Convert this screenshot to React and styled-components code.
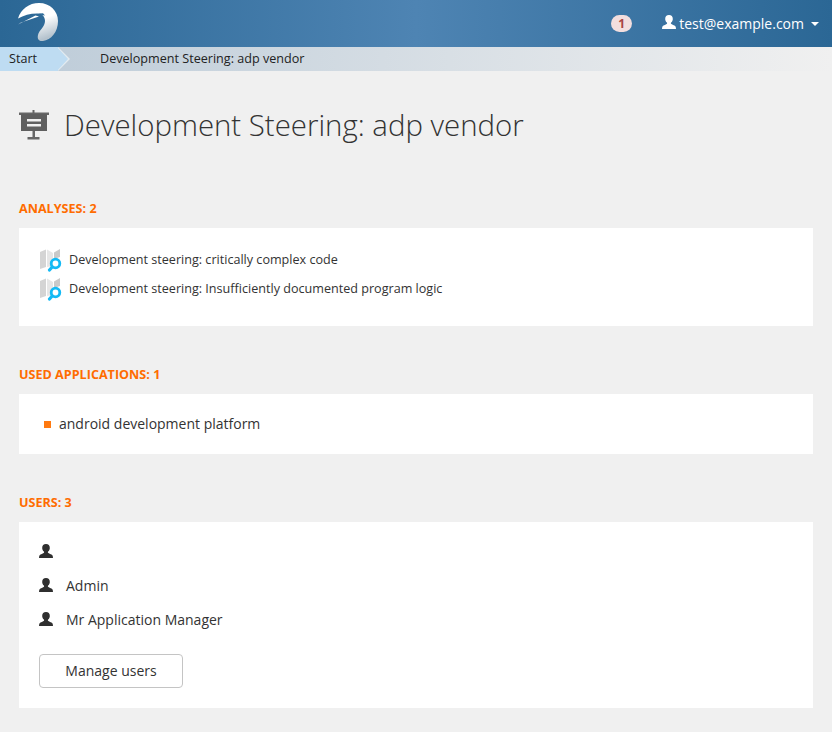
import React from "react";
import styled, { createGlobalStyle } from "styled-components";

const GlobalStyle = createGlobalStyle`
  html, body {
    margin: 0;
    padding: 0;
    background: #f0f0f0;
    font-family: "Open Sans", "Liberation Sans", sans-serif;
    color: #333;
  }
`;

const Page = styled.div`
  width: 832px;
  height: 732px;
  overflow: hidden;
`;

const Navbar = styled.header`
  height: 47px;
  display: flex;
  align-items: center;
  padding: 0 13px 0 18px;
  background: linear-gradient(90deg, #2b6795 0%, #4e84b3 50%, #2b6795 100%);
`;

const Logo = styled.svg`
  width: 40px;
  height: 40px;
  margin-top: -4px;
`;

const NavRight = styled.div`
  margin-left: auto;
  display: flex;
  align-items: center;
`;

const Badge = styled.span`
  width: 21px;
  height: 17px;
  border-radius: 9px;
  background: #f2dede;
  color: #a94442;
  font-size: 12px;
  font-weight: 700;
  display: flex;
  align-items: center;
  justify-content: center;
  margin-right: 30px;
`;

const UserMenu = styled.div`
  display: flex;
  align-items: center;
  color: #fff;
  font-size: 14px;
  margin-top: -1px;
`;

const Caret = styled.span`
  width: 0;
  height: 0;
  margin-left: 7px;
  margin-top: 2px;
  border-left: 4px solid transparent;
  border-right: 4px solid transparent;
  border-top: 4px solid #fff;
`;

const Breadcrumb = styled.nav`
  height: 24px;
  display: flex;
  align-items: center;
  font-size: 12.6px;
  color: #222;
  background: linear-gradient(90deg, #bccbd8 0%, #f0f0f0 100%);
`;

const CrumbStart = styled.div`
  position: relative;
  width: 58px;
  height: 24px;
  line-height: 23px;
  padding-left: 9px;
  box-sizing: border-box;
  background: #bedcf2;

  &::before {
    content: "";
    position: absolute;
    top: 0;
    left: 58px;
    border-top: 12px solid transparent;
    border-bottom: 12px solid transparent;
    border-left: 12px solid #e4ebf0;
  }

  &::after {
    content: "";
    position: absolute;
    top: 0;
    left: 57px;
    border-top: 12px solid transparent;
    border-bottom: 12px solid transparent;
    border-left: 11px solid #bedcf2;
  }
`;

const CrumbCurrent = styled.div`
  margin-left: 42px;
  height: 24px;
  line-height: 23px;
`;

const Content = styled.main`
  padding: 0 19px;
`;

const TitleRow = styled.div`
  display: flex;
  align-items: center;
  height: 44px;
  margin-top: 32px;
  margin-bottom: 53px;
`;

const TitleIcon = styled.svg`
  width: 32px;
  height: 32px;
  margin-left: -1px;
  margin-right: 14px;
  flex: none;
`;

const Title = styled.h1`
  margin: 0;
  font-size: 29.4px;
  font-weight: 300;
  color: #333;
  line-height: 44px;
  white-space: nowrap;
`;

const SectionTitle = styled.h2`
  margin: 0;
  height: 18px;
  line-height: 18px;
  font-size: 12.6px;
  font-weight: 700;
  color: #ff6c00;
  text-transform: uppercase;
`;

const Panel = styled.section`
  background: #fff;
  box-sizing: border-box;
  height: ${({ $height }) => $height}px;
  padding: ${({ $padding }) => $padding};
  margin-top: 10px;
  margin-bottom: 40px;
`;

const AnalysisRow = styled.div`
  display: flex;
  align-items: center;
  height: 29px;
  font-size: 12.6px;
  color: #333;
`;

const AnalysisIcon = styled.svg`
  width: 24px;
  height: 24px;
  margin-right: 6px;
  flex: none;
`;

const AppRow = styled.div`
  display: flex;
  align-items: center;
  height: 60px;
  padding-bottom: 1px;
  box-sizing: border-box;
  font-size: 14px;
  color: #333;
`;

const Square = styled.span`
  width: 7px;
  height: 7px;
  background: #ff7a10;
  margin-right: 8px;
  margin-top: 2px;
`;

const UserRow = styled.div`
  display: flex;
  align-items: center;
  height: 34px;
  font-size: 14px;
  color: #333;
`;

const UserIcon = styled.svg`
  width: 14px;
  height: 14px;
  flex: none;
  margin-right: ${({ $gap }) => $gap}px;
  margin-top: ${({ $top }) => $top || 0}px;
`;

const Button = styled.button`
  display: block;
  width: 144px;
  height: 34px;
  margin-top: 18px;
  padding: 0 0 2px;
  border: 1px solid #c4c4c4;
  border-radius: 4px;
  background: #fff;
  font-family: inherit;
  font-size: 14px;
  color: #333;
`;

const PersonPath = ({ color }) => (
  <path
    fill={color}
    d="M7 0C4.500 0 3.200 1.700 3.200 3.900c0 1.500.7 2.900 1.700 3.700.3.3.3.8.1 1.100C4.400 9.600 1.400 10 .6 11.300.2 12 0 13 0 14h14c0-1-.2-2-.6-2.700-.8-1.300-3.800-1.700-4.400-2.600-.2-.3-.2-.8.1-1.100 1-.8 1.700-2.200 1.700-3.700C10.800 1.700 9.500 0 7 0z"
  />
);

const MapSearchIcon = () => (
  <AnalysisIcon viewBox="0 0 24 24">
    <polygon points="1,4 7,1.500 7,19 1,21" fill="#d4d4d4" />
    <polygon points="8,1.500 14,5 14,18 8,19" fill="#e6e6e6" />
    <polygon points="15,4.500 21,1 21,9 15,11" fill="#c9c9c9" />
    <circle cx="16.500" cy="15.500" r="4.300" fill="#fff" stroke="#14baf5" strokeWidth="2.800" />
    <line x1="13.200" y1="19" x2="10.500" y2="22" stroke="#14baf5" strokeWidth="3.200" strokeLinecap="round" />
  </AnalysisIcon>
);

const users = ["", "Admin", "Mr Application Manager"];
const analyses = [
  "Development steering: critically complex code",
  "Development steering: Insufficiently documented program logic",
];

export default function App() {
  return (
    <Page>
      <GlobalStyle />
      <Navbar>
        <Logo viewBox="0 0 40 40">
          <defs>
            <linearGradient id="logoFill" x1="0.2" y1="0.2" x2="0.5" y2="1">
              <stop offset="0.4" stopColor="#ffffff" />
              <stop offset="1" stopColor="#b4c2cd" />
            </linearGradient>
          </defs>
          <path
            fill="url(#logoFill)"
            d="M0 16.500C3 7 11 1 21 1c11 0 19 8 19 18 0 11-7 19-15 20-4 .5-6-2-5-6 1-5 7-8 7-14 0-4-2.500-7-6-7.500C14 11 6 13 0 16.500z"
          />
          <path fill="#ffffff" d="M0 22.500L17.500 13.500 21 14.500 3 20.500z" />
          <path fill="#2f6c9b" d="M21 11.500l4-.3 2 2.300-3.500-.5z" />
        </Logo>
        <NavRight>
          <Badge>1</Badge>
          <UserMenu>
            <UserIcon viewBox="0 0 14 14" $gap={3} $top={-2}>
              <PersonPath color="#fff" />
            </UserIcon>
            test@example.com
            <Caret />
          </UserMenu>
        </NavRight>
      </Navbar>

      <Breadcrumb>
        <CrumbStart>Start</CrumbStart>
        <CrumbCurrent>Development Steering: adp vendor</CrumbCurrent>
      </Breadcrumb>

      <Content>
        <TitleRow>
          <TitleIcon viewBox="0 0 32 32">
            <rect x="14.500" y="1" width="2" height="3" fill="#666" />
            <rect x="1" y="3.500" width="30" height="2.500" fill="#666" />
            <rect x="3" y="5" width="26" height="17" fill="#5f5f5f" />
            <rect x="9" y="10" width="14" height="2.500" fill="#f0f0f0" />
            <rect x="9" y="15" width="14" height="2.500" fill="#f0f0f0" />
            <rect x="14.500" y="22" width="2.500" height="7" fill="#666" />
            <rect x="9.500" y="28" width="12" height="2.500" fill="#666" />
          </TitleIcon>
          <Title>Development Steering: adp vendor</Title>
        </TitleRow>

        <SectionTitle>Analyses: 2</SectionTitle>
        <Panel $height={98} $padding="17px 20px">
          {analyses.map((name) => (
            <AnalysisRow key={name}>
              <MapSearchIcon />
              {name}
            </AnalysisRow>
          ))}
        </Panel>

        <SectionTitle>Used applications: 1</SectionTitle>
        <Panel $height={60} $padding="0 25px">
          <AppRow>
            <Square />
            android development platform
          </AppRow>
        </Panel>

        <SectionTitle>Users: 3</SectionTitle>
        <Panel $height={186} $padding="12px 20px">
          {users.map((name) => (
            <UserRow key={name || "blank"}>
              <UserIcon viewBox="0 0 14 14" $gap={13}>
                <PersonPath color="#2f2f2f" />
              </UserIcon>
              {name}
            </UserRow>
          ))}
          <Button>Manage users</Button>
        </Panel>
      </Content>
    </Page>
  );
}
